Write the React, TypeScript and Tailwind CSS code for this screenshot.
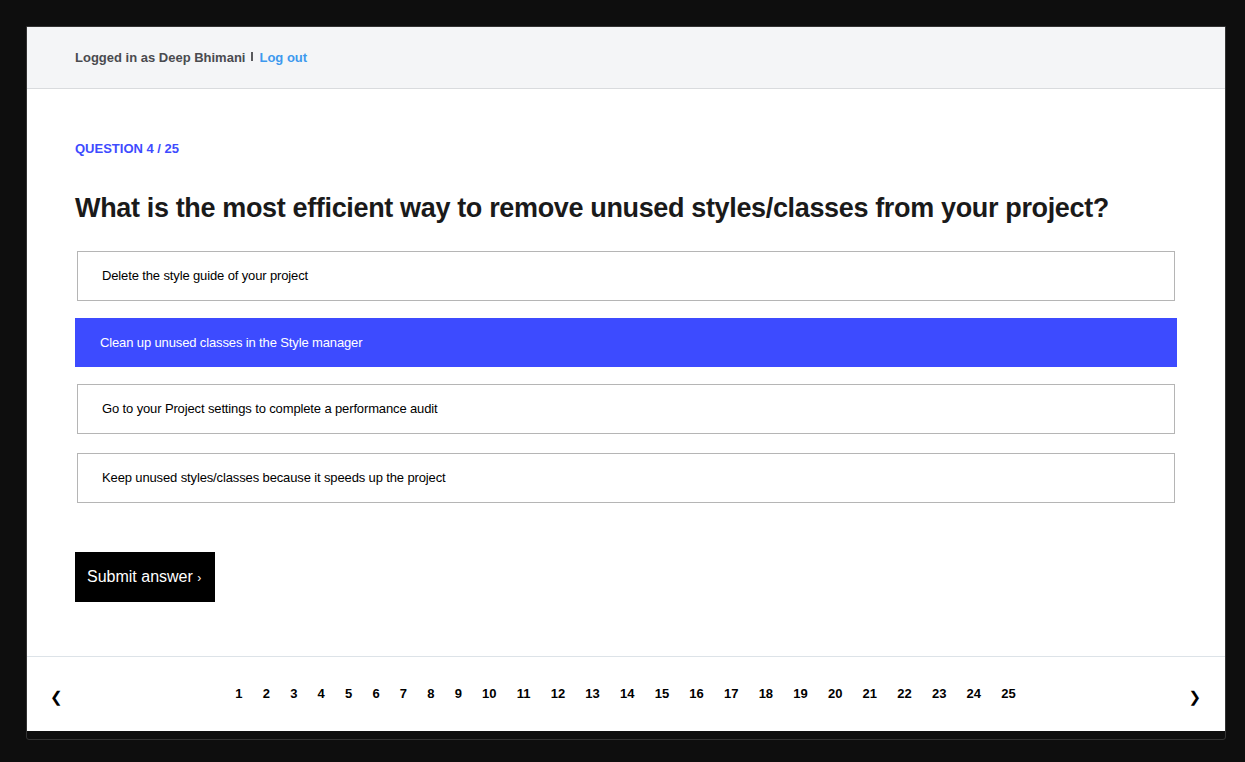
import { useState } from "react"

const options = [
  "Delete the style guide of your project",
  "Clean up unused classes in the Style manager",
  "Go to your Project settings to complete a performance audit",
  "Keep unused styles/classes because it speeds up the project",
]

const gaps = ["mt-0", "mt-[17px]", "mt-[17px]", "mt-[19px]"]

const pages = Array.from({ length: 25 }, (_, i) => i + 1)

export default function App() {
  const [selected, setSelected] = useState(1)

  return (
    <div className="min-h-screen w-full bg-[#0e0e0e] pt-[26px] px-[26px] font-['Liberation_Sans',Arial,sans-serif]">
      <div className="w-[1200px] border border-[#333] rounded-b-[3px] pb-[8px] bg-[#0e0e0e]">
        <div className="bg-white flex flex-col">
          {/* header */}
          <div className="h-[62px] bg-[#f4f5f7] border-b border-[#d9dbde] flex items-center px-[48px] text-[13px] font-bold">
            <span className="text-[#4a4b4f]">Logged in as Deep Bhimani</span>
            <span className="w-[2px] h-[9px] bg-[#5a5a5e] mx-[6px] mb-[2px]" />
            <a className="text-[#3e99ee] cursor-pointer">Log out</a>
          </div>

          <div className="px-[48px] pt-[53px] pb-[54px] flex flex-col">
            <div className="text-[13px] font-bold text-[#3e4bff] leading-[14px]">QUESTION 4 / 25</div>
            <h1 className="mt-[35px] text-[27px] leading-[34px] font-bold text-[#1a1a1a] tracking-[-0.35px]">
              What is the most efficient way to remove unused styles/classes from your project?
            </h1>

            <div className="mt-[26px] flex flex-col">
              {options.map((o, i) =>
                i === selected ? (
                  <button
                    key={o}
                    onClick={() => setSelected(i)}
                    className={`${gaps[i]} h-[49px] bg-[#3d4bff] text-white text-[13px] tracking-[-0.13px] text-left pl-[25px]`}
                  >
                    {o}
                  </button>
                ) : (
                  <button
                    key={o}
                    onClick={() => setSelected(i)}
                    className={`${gaps[i]} mx-[2px] h-[50px] border border-[#b5b5b5] bg-white text-black text-[13px] tracking-[-0.13px] text-left pl-[24px]`}
                  >
                    {o}
                  </button>
                )
              )}
            </div>

            <button className="mt-[49px] w-[140px] h-[50px] bg-black text-white text-[16px] text-left pl-[12px]">
              Submit answer <span className="text-[12px]">›</span>
            </button>
          </div>

          {/* pagination */}
          <div className="border-t border-[#dde3e8] h-[75px] flex items-center justify-between pl-[23px] pr-[24px]">
            <span className="text-[15px] text-black font-['DejaVu_Sans',sans-serif] mt-[7px]">❮</span>
            <div className="flex items-center text-[13px] font-bold text-black mb-[1px]">
              {pages.map((p) => (
                <span key={p} className="px-[10.1px] cursor-pointer">{p}</span>
              ))}
            </div>
            <span className="text-[15px] text-black font-['DejaVu_Sans',sans-serif] mt-[7px]">❯</span>
          </div>
        </div>
      </div>
    </div>
  )
}
